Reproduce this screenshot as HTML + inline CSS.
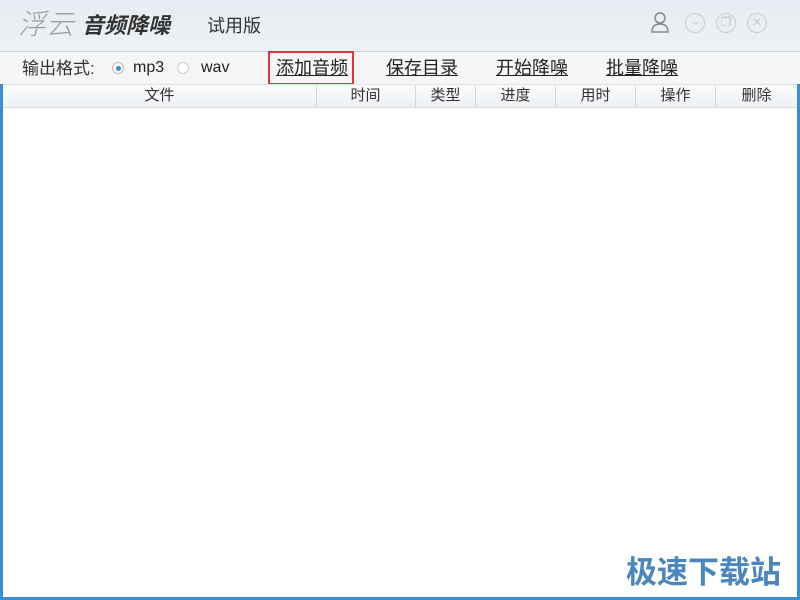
<!DOCTYPE html>
<html><head><meta charset="utf-8"><style>
body{margin:0;width:800px;height:600px;overflow:hidden;background:#fff;font-family:"Liberation Sans","Noto Sans CJK SC",sans-serif;position:relative}
.title{position:absolute;left:0;top:0;width:800px;height:52px;background:linear-gradient(#e6ecf1,#eef2f5)}
.tb{position:absolute;left:0;top:51px;width:800px;height:33px;background:#f4f6f8;border-top:1px solid #c9d0d6}
.abs{position:absolute;white-space:nowrap;line-height:1}
.hdr{position:absolute;top:84px;left:3px;width:794px;height:22px;background:linear-gradient(#fafbfc,#eef1f4);border-bottom:1px solid #d8dde2;border-top:1px solid #dde2e6}
.hdr div{position:absolute;top:0;height:22px;line-height:22px;text-align:center;font-size:15px;color:#333;border-right:1px solid #d2d7dc}
.lnk{font-size:18px;color:#222;text-decoration:underline;top:59px}
.circ{position:absolute;top:13px;width:20px;height:20px;border:1.5px solid #c9ced3;border-radius:50%;box-sizing:border-box;color:#c3c8cd;font-size:12px;line-height:17px;text-align:center}
</style></head><body>
<div class="title"></div>
<div class="abs" style="left:18px;top:9px;font-size:28px;color:#9aa0a6;font-style:italic;font-family:'Noto Sans CJK SC',sans-serif;font-weight:300">浮云</div>
<div class="abs" style="left:82px;top:13px;font-size:22px;color:#333;font-style:italic;font-weight:bold;font-family:'Noto Sans CJK SC',sans-serif">音频降噪</div>
<div class="abs" style="left:207px;top:17px;font-size:18px;color:#333">试用版</div>
<svg class="abs" style="left:650px;top:11px" width="20" height="22" viewBox="0 0 20 22"><circle cx="10" cy="7" r="5" fill="none" stroke="#888" stroke-width="1.5"/><path d="M2 21 Q2 13 10 13 Q18 13 18 21 Z" fill="none" stroke="#888" stroke-width="1.5"/></svg>
<div class="circ" style="left:685px">–</div>
<div class="circ" style="left:716px">❐</div>
<div class="circ" style="left:747px">✕</div>
<div class="tb"></div>
<div class="abs" style="left:22px;top:60px;font-size:17px;color:#333">输出格式:</div>
<div class="abs" style="left:112px;top:62px;width:12px;height:12px;border-radius:50%;border:1px solid #bbb;background:#fff;box-sizing:border-box"><div style="margin:2.5px;width:5px;height:5px;border-radius:50%;background:#3d87c9"></div></div>
<div class="abs" style="left:133px;top:60px;font-size:16px;color:#222">mp3</div>
<div class="abs" style="left:177px;top:62px;width:12px;height:12px;border-radius:50%;border:1px solid #ccc;background:#fff;box-sizing:border-box"></div>
<div class="abs" style="left:201px;top:60px;font-size:16px;color:#222">wav</div>
<div class="abs" style="left:268px;top:51px;width:86px;height:34px;border:2px solid #d9363e;box-sizing:border-box"></div>
<div class="abs lnk" style="left:276px">添加音频</div>
<div class="abs lnk" style="left:386px">保存目录</div>
<div class="abs lnk" style="left:496px">开始降噪</div>
<div class="abs lnk" style="left:606px">批量降噪</div>
<div class="hdr">
<div style="left:0;width:313px">文件</div>
<div style="left:313px;width:99px">时间</div>
<div style="left:413px;width:59px">类型</div>
<div style="left:473px;width:79px">进度</div>
<div style="left:553px;width:79px">用时</div>
<div style="left:633px;width:79px">操作</div>
<div style="left:713px;width:81px;border:none">删除</div>
</div>
<div class="abs" style="left:0;top:84px;width:3px;height:516px;background:#3a8fd6"></div>
<div class="abs" style="left:797px;top:84px;width:3px;height:516px;background:#3a8fd6"></div>
<div class="abs" style="left:0;top:597px;width:800px;height:3px;background:#3a8fd6"></div>
<div class="abs" style="left:626px;top:554px;font-size:31px;font-weight:bold;color:#4a86c0;font-family:'Noto Sans CJK SC',sans-serif">极速下载站</div>
</body></html>
